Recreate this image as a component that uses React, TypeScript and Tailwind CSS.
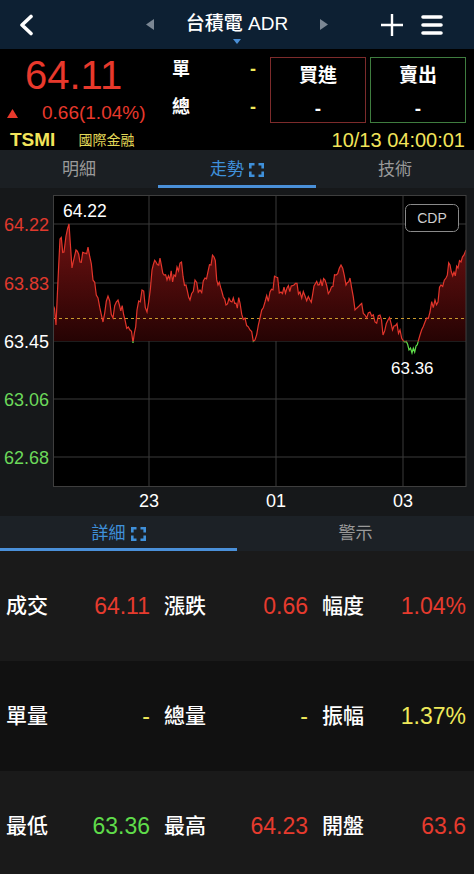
import React from 'react';

const FONT = "font-['Liberation_Sans','Noto_Sans_CJK_TC',sans-serif]";

// rough shape of the intraday line, in page pixels (x, y)
const KEYS: [number, number][] = [
  [53, 305], [56, 325], [60, 239], [64, 252], [66, 236], [69, 224], [72, 268], [76, 250],
  [80, 262], [88, 247], [93, 280], [98, 298], [103, 322], [108, 296], [113, 318],
  [118, 300], [125, 320], [130, 330], [133, 343], [137, 310], [142, 290], [147, 312],
  [152, 270], [156, 262], [160, 258], [167, 280], [174, 275], [180, 263], [186, 285],
  [190, 300], [195, 280], [200, 290], [205, 278], [211, 265], [214, 257], [218, 285],
  [222, 292], [226, 305], [232, 302], [240, 303], [245, 318], [250, 330], [255, 340],
  [260, 318], [265, 302], [270, 292], [276, 277], [281, 292], [287, 288], [294, 285],
  [300, 292], [305, 296], [310, 300], [318, 285], [325, 280], [330, 291], [336, 275],
  [341, 265], [346, 285], [350, 278], [355, 310], [360, 305], [365, 315], [370, 312],
  [375, 322], [380, 315], [383, 335], [388, 320], [394, 326], [400, 330], [405, 342],
  [409, 350], [412, 353], [416, 346], [420, 335], [425, 322], [430, 312], [435, 300],
  [438, 302], [441, 285], [446, 278], [450, 265], [454, 272], [458, 268], [461, 262],
  [464, 255], [466, 250],
];

function buildLine() {
  let seed = 11;
  const rand = () => {
    seed = (seed * 16807) % 2147483647;
    return seed / 2147483647;
  };
  const pts: [number, number][] = [];
  for (let i = 0; i < KEYS.length - 1; i++) {
    const [x0, y0] = KEYS[i];
    const [x1, y1] = KEYS[i + 1];
    pts.push([x0, y0]);
    const steps = Math.floor((x1 - x0) / 1.3);
    for (let s = 1; s < steps; s++) {
      const t = s / steps;
      let y = y0 + (y1 - y0) * t + (rand() - 0.5) * 13;
      y = Math.max(226, Math.min(352, y));
      pts.push([x0 + (x1 - x0) * t, y]);
    }
  }
  pts.push(KEYS[KEYS.length - 1]);
  return pts.map(([x, y]) => `${x.toFixed(1)},${y.toFixed(1)}`).join(' ');
}

const LINE = buildLine();

function ExpandIcon() {
  return (
    <svg width="15" height="14" viewBox="0 0 15 14" fill="none" stroke="currentColor" strokeWidth="2.6">
      <path d="M1.3 5.5V1.3h4.2M9.5 1.3h4.2v4.2M13.7 8.5v4.2H9.5M5.5 12.7H1.3V8.5" />
    </svg>
  );
}

function Chart() {
  const grid = [224, 283, 341, 399, 457];
  const yLabels = [
    { y: 224, t: '64.22', c: '#e0392d' },
    { y: 283, t: '63.83', c: '#e0392d' },
    { y: 341, t: '63.45', c: '#ffffff' },
    { y: 399, t: '63.06', c: '#6cd95a' },
    { y: 457, t: '62.68', c: '#6cd95a' },
  ];
  const xs = [
    { x: 149, t: '23' },
    { x: 276, t: '01' },
    { x: 403, t: '03' },
  ];
  return (
    <svg width="474" height="328" viewBox="0 188 474 328" className="block">
      <defs>
        <linearGradient id="fill" x1="0" y1="224" x2="0" y2="341" gradientUnits="userSpaceOnUse">
          <stop offset="0" stopColor="#701212" />
          <stop offset="1" stopColor="#260303" />
        </linearGradient>
        <clipPath id="up">
          <rect x="53" y="195" width="413" height="146.5" />
        </clipPath>
        <clipPath id="down">
          <rect x="53" y="341.5" width="413" height="40" />
        </clipPath>
      </defs>
      <rect x="53" y="195" width="413" height="292" fill="#000" />
      {grid.map((y) => (
        <line key={y} x1="53" x2="466" y1={y} y2={y} stroke="#3a3a3a" strokeWidth="1" />
      ))}
      {xs.map((v) => (
        <line key={v.x} x1={v.x} x2={v.x} y1="195" y2="487" stroke="#3a3a3a" strokeWidth="1" />
      ))}
      <polygon points={`53,341 ${LINE} 466,341`} fill="url(#fill)" clipPath="url(#up)" />
      <line x1="53" x2="466" y1="318.5" y2="318.5" stroke="#c99a2e" strokeWidth="1" strokeDasharray="3 3" />
      <polyline points={LINE} fill="none" stroke="#e2352b" strokeWidth="1.2" clipPath="url(#up)" />
      <polyline points={LINE} fill="none" stroke="#5fdc4a" strokeWidth="1.2" clipPath="url(#down)" />
      <rect x="53.5" y="195.5" width="412.5" height="291" fill="none" stroke="#3e3e3e" strokeWidth="1" />
      <g fontFamily="Liberation Sans, sans-serif">
        {yLabels.map((l) => (
          <text key={l.t} x="49" y={l.y + 6.5} textAnchor="end" fontSize="18" fill={l.c}>
            {l.t}
          </text>
        ))}
        {xs.map((v) => (
          <text key={v.t} x={v.x} y="507" textAnchor="middle" fontSize="18" fill="#fff">
            {v.t}
          </text>
        ))}
        <text x="63" y="217" fontSize="17.5" fill="#fff">64.22</text>
        <text x="391" y="374" fontSize="17" fill="#fff">63.36</text>
        <rect x="405.5" y="204.5" width="53" height="27" rx="5" fill="#000" stroke="#8a8a8a" strokeWidth="1" />
        <text x="432" y="223" textAnchor="middle" fontSize="14" fill="#cfcfcf">CDP</text>
      </g>
    </svg>
  );
}

type Cell = { label: string; value: string; color: string };

const ROWS: { bg: string; cells: Cell[] }[] = [
  {
    bg: 'bg-[#1a1a1a]',
    cells: [
      { label: '成交', value: '64.11', color: 'text-[#e63b2e]' },
      { label: '漲跌', value: '0.66', color: 'text-[#e63b2e]' },
      { label: '幅度', value: '1.04%', color: 'text-[#e63b2e]' },
    ],
  },
  {
    bg: 'bg-[#111111]',
    cells: [
      { label: '單量', value: '-', color: 'text-[#efe95a]' },
      { label: '總量', value: '-', color: 'text-[#efe95a]' },
      { label: '振幅', value: '1.37%', color: 'text-[#efe95a]' },
    ],
  },
  {
    bg: 'bg-[#1a1a1a]',
    cells: [
      { label: '最低', value: '63.36', color: 'text-[#5fdc4a]' },
      { label: '最高', value: '64.23', color: 'text-[#e63b2e]' },
      { label: '開盤', value: '63.6', color: 'text-[#e63b2e]' },
    ],
  },
];

export default function App() {
  return (
    <div className={`w-[474px] h-[874px] overflow-hidden bg-black text-white ${FONT}`}>
      {/* top bar */}
      <div className="h-[49px] bg-[#0d2033] flex items-center">
        <div className="w-[120px] pl-[18px]">
          <svg width="16" height="22" viewBox="0 0 16 22" fill="none" stroke="#fff" strokeWidth="3.6" strokeLinecap="round" strokeLinejoin="round">
            <path d="M13 2.5 4 11l9 8.5" />
          </svg>
        </div>
        <div className="flex-1 flex items-center justify-between px-[26px]">
          <svg width="8" height="11" viewBox="0 0 8 11">
            <path d="M8 0v11L0 5.5z" fill="#7b8794" />
          </svg>
          <div className="flex flex-col items-center pt-[7px]">
            <span className="text-[19px] leading-[24px] font-medium">台積電 ADR</span>
            <svg width="8" height="5" viewBox="0 0 8 5" className="mt-[3px]">
              <path d="M0 0h8L4 5z" fill="#4a8fd6" />
            </svg>
          </div>
          <svg width="8" height="11" viewBox="0 0 8 11">
            <path d="M0 0v11l8-5.5z" fill="#7b8794" />
          </svg>
        </div>
        <div className="w-[120px] flex items-center justify-end gap-[18px] pr-[31px]">
          <svg width="22" height="22" viewBox="0 0 22 22" stroke="#fff" strokeWidth="2.4">
            <path d="M11 0v22M0 11h22" />
          </svg>
          <svg width="22" height="20" viewBox="0 0 22 20" stroke="#fff" strokeWidth="3.6" strokeLinecap="round">
            <path d="M2 2h18M2 10h18M2 18h18" />
          </svg>
        </div>
      </div>

      {/* quote */}
      <div className="h-[101px] bg-black">
        <div className="h-[78px] flex">
          <div className="w-[170px]">
            <div className="pl-[25px] pt-[6px] text-[40px] leading-[40px] text-[#e8392c]">64.11</div>
            <div className="flex items-center pl-[7px] mt-[7px] h-[22px]">
              <svg width="11" height="9" viewBox="0 0 11 9">
                <path d="M5.5 0 11 9H0z" fill="#e8392c" />
              </svg>
              <span className="ml-[24px] text-[19px] leading-[22px] text-[#e8392c]">0.66(1.04%)</span>
            </div>
          </div>
          <div className="w-[100px] pt-[5px] flex flex-col gap-[8px]">
            <div className="h-[30px] flex items-center justify-between pl-[2px] pr-[14px]">
              <span className="text-[18px] font-bold">單</span>
              <span className="text-[18px] font-bold text-[#efe95a]">-</span>
            </div>
            <div className="h-[30px] flex items-center justify-between pl-[2px] pr-[14px]">
              <span className="text-[18px] font-bold">總</span>
              <span className="text-[18px] font-bold text-[#efe95a]">-</span>
            </div>
          </div>
          <div className="mt-[8px] w-[96px] h-[66px] border border-[#7d2b2b] flex flex-col items-center">
            <span className="mt-[6px] text-[19px] leading-[24px] font-bold">買進</span>
            <span className="mt-[9px] text-[19px] leading-[24px] font-bold">-</span>
          </div>
          <div className="mt-[8px] ml-[4px] w-[96px] h-[66px] border border-[#3f7d3f] flex flex-col items-center">
            <span className="mt-[6px] text-[19px] leading-[24px] font-bold">賣出</span>
            <span className="mt-[9px] text-[19px] leading-[24px] font-bold">-</span>
          </div>
        </div>
        <div className="h-[23px] flex items-center pt-[2px] pl-[10px] pr-[9px]">
          <span className="text-[19px] leading-[22px] font-bold text-[#f2e45a]">TSMI</span>
          <span className="ml-[23px] text-[14px] leading-[20px] text-[#e2d858]">國際金融</span>
          <span className="ml-auto text-[20px] leading-[22px] text-[#f2e45a]">10/13 04:00:01</span>
        </div>
      </div>

      {/* view tabs */}
      <div className="h-[38px] bg-[#1b1f23] grid grid-cols-3">
        <div className="flex flex-col">
          <div className="flex-1 flex items-center justify-center pt-[4px] text-[17px] text-[#9a9a9a]">明細</div>
          <div className="h-[3px]" />
        </div>
        <div className="flex flex-col">
          <div className="flex-1 flex items-center justify-center gap-[5px] pt-[4px] text-[17px] text-[#3f90da]">
            走勢
            <ExpandIcon />
          </div>
          <div className="h-[3px] bg-[#4a90d9]" />
        </div>
        <div className="flex flex-col">
          <div className="flex-1 flex items-center justify-center pt-[4px] text-[17px] text-[#9a9a9a]">技術</div>
          <div className="h-[3px]" />
        </div>
      </div>

      {/* chart */}
      <div className="h-[328px] bg-[#16181a]">
        <Chart />
      </div>

      {/* detail tabs */}
      <div className="h-[35px] bg-[#1c2126] grid grid-cols-2">
        <div className="flex flex-col">
          <div className="flex-1 flex items-center justify-center gap-[5px] pt-[4px] text-[17px] text-[#3f90da]">
            詳細
            <ExpandIcon />
          </div>
          <div className="h-[3px] bg-[#4a90d9]" />
        </div>
        <div className="flex flex-col">
          <div className="flex-1 flex items-center justify-center pt-[4px] text-[17px] text-[#9a9a9a]">警示</div>
          <div className="h-[3px]" />
        </div>
      </div>

      {/* stats */}
      {ROWS.map((row, i) => (
        <div key={i} className={`h-[110px] grid grid-cols-3 ${row.bg}`}>
          {row.cells.map((c) => (
            <div key={c.label} className="flex items-center justify-between pl-[6px] pr-[8px]">
              <span className="text-[21px] font-medium">{c.label}</span>
              <span className={`text-[23px] ${c.color}`}>{c.value}</span>
            </div>
          ))}
        </div>
      ))}
    </div>
  );
}
